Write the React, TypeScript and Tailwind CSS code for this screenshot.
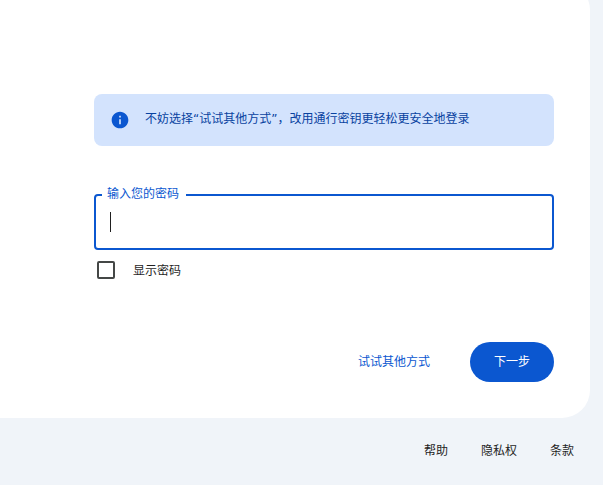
export default function App() {
    return <div className="h-[485px] w-[603px] overflow-hidden bg-[#f0f4f9] text-[12px] text-[#1f1f1f] font-['Noto_Sans_CJK_SC',sans-serif]">
        <div className="mt-[-18px] flex h-[436px] w-[590px] flex-col rounded-r-[28px] bg-white pt-[112px] pl-[94px] pr-[36px]">
            <div className="flex h-[52px] items-center gap-[15px] rounded-[8px] bg-[#d3e3fd] pl-[16px] text-[#0842a0]">
                <svg viewBox="0 0 24 24" className="h-5 w-5 fill-[#0b57d0]">
                    <path d="M12 2C6.48 2 2 6.48 2 12s4.48 10 10 10 10-4.48 10-10S17.52 2 12 2zm1 15h-2v-6h2v6zm0-8h-2V7h2v2z" />
                </svg>
                <p className="mt-[-3px] font-['DejaVu_Sans','Noto_Sans_CJK_SC',sans-serif]">不妨选择“试试其他方式”，改用通行密钥更轻松更安全地登录</p>
            </div>
            <div className="relative mt-[48px] flex h-[56px] items-center rounded-[4px] border-2 border-[#0b57d0] pl-[14px]">
                <span className="absolute top-[-12px] left-[6px] bg-white pl-[5px] pr-[7px] leading-[18px] text-[#0b57d0]">输入您的密码</span>
                <div className="h-[20px] w-px bg-[#1f1f1f]" />
            </div>
            <div className="mt-[11px] flex h-[18px] items-center gap-[18px] pl-[3px]">
                <div className="h-[18px] w-[18px] rounded-[2px] border-2 border-[#444746]" />
                <span>显示密码</span>
            </div>
            <div className="mt-[63px] flex items-center justify-end gap-[40px]">
                <span className="mt-[-2px] text-[#0b57d0]">试试其他方式</span>
                <div className="flex h-[40px] w-[84px] items-center justify-center rounded-full bg-[#0b57d0] pb-[2px] text-white">下一步</div>
            </div>
        </div>
        <div className="flex h-[67px] items-center justify-end gap-[33px] pr-[29px] pb-[3px]">
            <span>帮助</span>
            <span>隐私权</span>
            <span>条款</span>
        </div>
    </div>
}
